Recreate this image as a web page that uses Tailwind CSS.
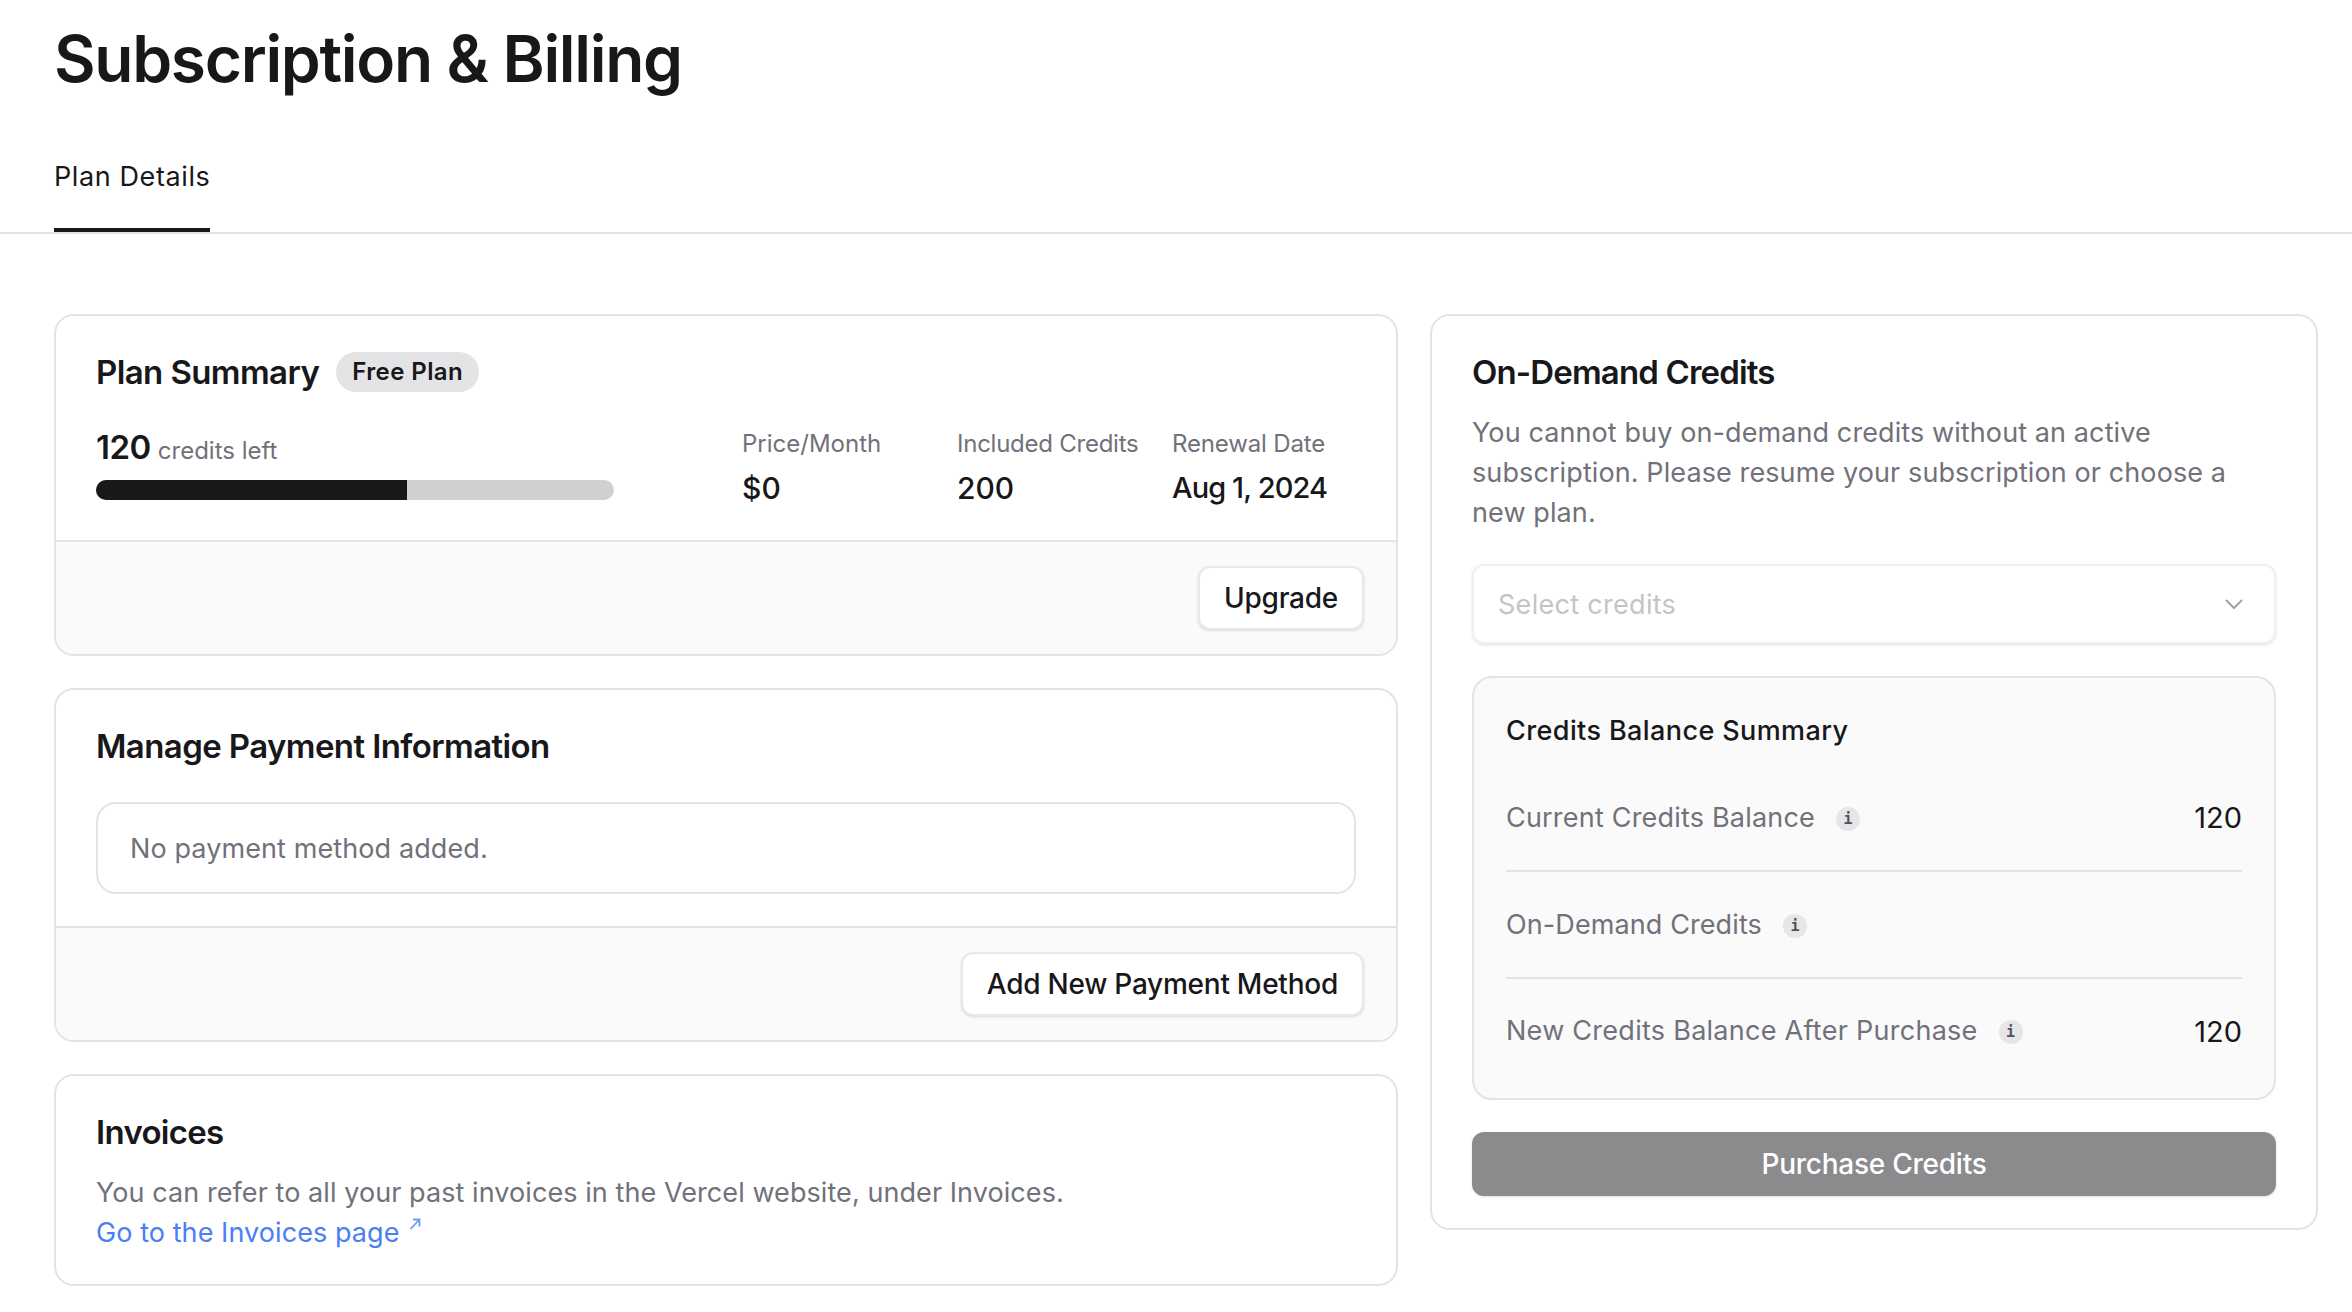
<!DOCTYPE html>
<html lang="en">
  <head>
    <meta charset="UTF-8" />
    <title>Subscription &amp; Billing</title>
    <script src="https://cdn.jsdelivr.net/npm/@tailwindcss/browser@4"></script>
  </head>
  <body class="bg-white text-[#18181b] font-['Inter',sans-serif] overflow-hidden h-[1312px]">
    <!-- Page header -->
    <header class="h-[234px] border-b-2 border-[#e4e4e7] px-[54px]">
      <h1 class="pt-[23px] text-[64px] leading-[72px] font-semibold tracking-[-1.3px]">Subscription &amp; Billing</h1>
      <div class="mt-[62px] w-[156px] h-[75px] border-b-4 border-[#18181b]">
        <span class="text-[27px] leading-[40px] tracking-[0.6px] whitespace-nowrap">Plan Details</span>
      </div>
    </header>

    <main class="flex gap-[32px] pl-[54px] pr-[34px] pt-[80px] items-start">
      <!-- Left column -->
      <div class="w-[1344px] flex flex-col gap-[32px]">
        <section class="border-2 border-[#e4e4e7] rounded-[20px] overflow-hidden">
          <div class="h-[226px] px-[40px] pt-[36px] border-b-2 border-[#e4e4e7]">
            <div class="flex items-center gap-[17px] h-[40px]">
              <h2 class="text-[33px] leading-[40px] font-semibold tracking-[-0.6px]">Plan Summary</h2>
              <span class="h-[40px] px-[16px] rounded-full bg-[#e4e4e7] text-[24px] leading-[40px] font-semibold tracking-[0.4px]">Free Plan</span>
            </div>
            <div class="flex mt-[34px]">
              <div class="w-[518px] mr-[128px]">
                <div class="h-[40px] flex items-baseline gap-[7px] pt-[1px]">
                  <span class="text-[33px] leading-[40px] font-semibold tracking-[-0.5px]">120</span>
                  <span class="text-[24px] text-[#71717a]">credits left</span>
                </div>
                <div class="mt-[14px] h-[20px] rounded-full bg-[#d0d0d0] overflow-hidden">
                  <div class="h-full bg-[#18181b]" style="width: 60%"></div>
                </div>
              </div>
              <div class="w-[215px]">
                <p class="text-[24px] leading-[36px] text-[#71717a]">Price/Month</p>
                <p class="mt-[6px] text-[30px] leading-[40px] font-medium">$0</p>
              </div>
              <div class="w-[215px]">
                <p class="text-[24px] leading-[36px] text-[#71717a] tracking-[-0.25px] whitespace-nowrap">Included Credits</p>
                <p class="mt-[6px] text-[30px] leading-[40px] font-medium">200</p>
              </div>
              <div>
                <p class="text-[24px] leading-[36px] text-[#71717a] tracking-[-0.15px] whitespace-nowrap">Renewal Date</p>
                <p class="mt-[6px] text-[29px] leading-[40px] font-medium tracking-[-0.9px] whitespace-nowrap">Aug 1, 2024</p>
              </div>
            </div>
          </div>
          <div class="h-[112px] bg-[#fafafa] flex items-center justify-end pr-[32px]">
            <button class="h-[64px] px-[24px] bg-white border-2 border-[#e8e8ea] rounded-[12px] text-[28px] tracking-[-0.25px] font-medium shadow-sm">Upgrade</button>
          </div>
        </section>

        <section class="border-2 border-[#e4e4e7] rounded-[20px] overflow-hidden">
          <div class="h-[238px] px-[40px] pt-[36px] border-b-2 border-[#e4e4e7]">
            <h2 class="text-[33px] leading-[40px] font-semibold tracking-[-0.6px]">Manage Payment Information</h2>
            <div class="mt-[36px] h-[92px] flex items-center px-[32px] pt-[3px] border-2 border-[#e4e4e7] rounded-[20px] text-[27px] tracking-[0.1px] text-[#71717a]">No payment method added.</div>
          </div>
          <div class="h-[112px] bg-[#fafafa] flex items-center justify-end pr-[32px]">
            <button class="h-[64px] px-[24px] bg-white border-2 border-[#e8e8ea] rounded-[12px] text-[28px] tracking-[-0.25px] font-medium shadow-sm">Add New Payment Method</button>
          </div>
        </section>

        <section class="h-[212px] border-2 border-[#e4e4e7] rounded-[20px] px-[40px] pt-[36px]">
          <h2 class="text-[33px] leading-[40px] font-semibold tracking-[-0.7px]">Invoices</h2>
          <p class="mt-[21px] text-[27px] leading-[40px] tracking-[0.07px] text-[#71717a]">You can refer to all your past invoices in the Vercel website, under Invoices.</p>
          <a class="flex items-start gap-[10px] text-[27px] leading-[40px] tracking-[0.07px] text-[#4a7ef5]">
            Go to the Invoices page
            <svg class="w-[12px] h-[12px] mt-[5px]" viewBox="0 0 12 12" fill="none" stroke="#6c9cf8" stroke-width="1.8"><path d="M1.5 11 10.5 1.5M4 1.5h6.5v7" /></svg>
          </a>
        </section>
      </div>

      <!-- Right column -->
      <section class="w-[888px] h-[916px] border-2 border-[#e4e4e7] rounded-[20px] px-[40px] pt-[36px]">
        <h2 class="text-[33px] leading-[40px] font-semibold tracking-[-0.85px]">On-Demand Credits</h2>
        <p class="mt-[21px] text-[27px] leading-[40px] tracking-[0.1px] text-[#71717a]">You cannot buy on-demand credits without an active subscription. Please resume your subscription or choose a new plan.</p>
        <div class="mt-[31px] h-[80px] flex items-center justify-between pl-[24px] pr-[30px] border-2 border-[#f0f0f1] rounded-[12px] shadow-sm">
          <span class="pt-[3px] text-[27px] tracking-[0.3px] text-[#c4c4c8]">Select credits</span>
          <svg class="w-[20px] h-[12px]" viewBox="0 0 20 12" fill="none" stroke="#a1a1aa" stroke-width="2"><path d="M2 2l8 8 8-8" /></svg>
        </div>
        <div class="mt-[32px] h-[424px] border-2 border-[#e4e4e7] rounded-[20px] bg-[#fafafa] px-[32px] pt-[33px]">
          <h3 class="text-[27px] leading-[40px] tracking-[0.4px] font-medium">Credits Balance Summary</h3>
          <div class="mt-[14px] flex flex-col">
            <div class="h-[107px] flex items-center justify-between border-b-2 border-[#e4e4e7]">
              <span class="flex items-center gap-[21px] pt-[2px] text-[27px] tracking-[0.2px] text-[#71717a]">Current Credits Balance
                <span class="w-[24px] h-[24px] rounded-full bg-[#e6e6e8] text-[#52525b] font-['DejaVu_Sans_Mono',monospace] text-[15px] leading-[24px] tracking-normal text-center font-bold">i</span>
              </span>
              <span class="text-[29px]">120</span>
            </div>
            <div class="h-[107px] flex items-center justify-between border-b-2 border-[#e4e4e7]">
              <span class="flex items-center gap-[21px] pt-[2px] text-[27px] tracking-[0.1px] text-[#71717a]">On-Demand Credits
                <span class="w-[24px] h-[24px] rounded-full bg-[#e6e6e8] text-[#52525b] font-['DejaVu_Sans_Mono',monospace] text-[15px] leading-[24px] tracking-normal text-center font-bold">i</span>
              </span>
            </div>
            <div class="h-[105px] flex items-center justify-between">
              <span class="flex items-center gap-[21px] text-[27px] tracking-[0.27px] text-[#71717a]">New Credits Balance After Purchase
                <span class="w-[24px] h-[24px] rounded-full bg-[#e6e6e8] text-[#52525b] font-['DejaVu_Sans_Mono',monospace] text-[15px] leading-[24px] tracking-normal text-center font-bold">i</span>
              </span>
              <span class="text-[29px]">120</span>
            </div>
          </div>
        </div>
        <button class="mt-[32px] w-full h-[64px] rounded-[12px] bg-[#8b8b8d] text-white text-[28px] tracking-[-0.25px] font-medium shadow-sm">Purchase Credits</button>
      </section>
    </main>
  </body>
</html>
